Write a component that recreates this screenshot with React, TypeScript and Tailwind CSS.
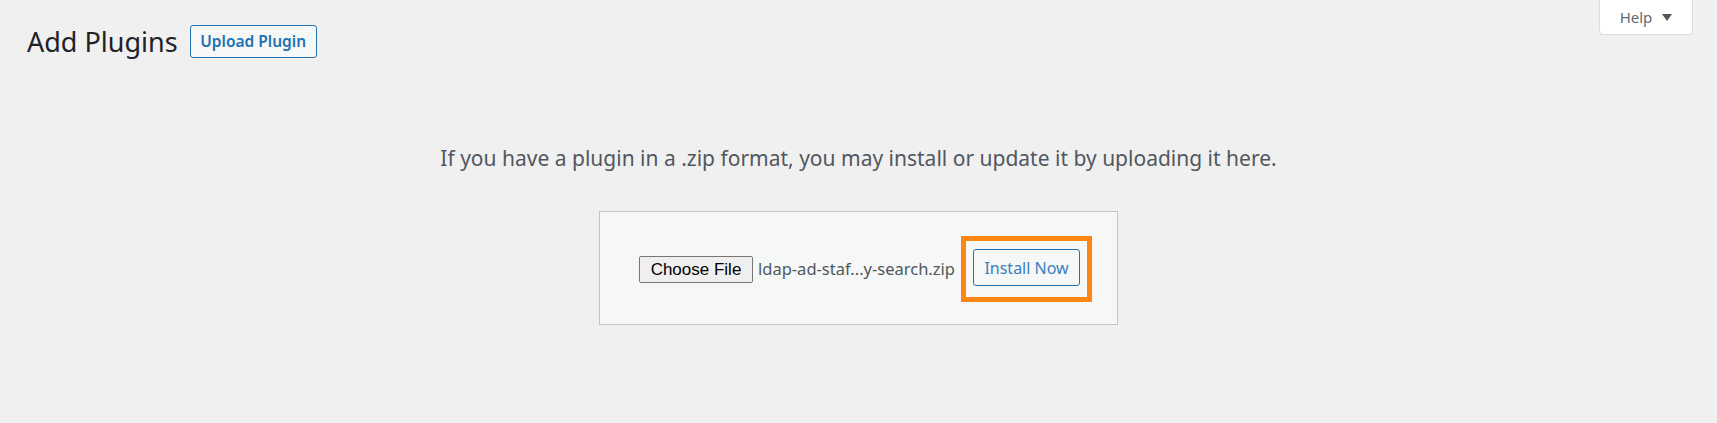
import { useState } from "react";

export default function AddPlugins() {
  const [fileName] = useState("ldap-ad-staf...y-search.zip");

  return (
    <div className="relative h-[423px] w-full overflow-hidden bg-[#f0f0f1] font-['Noto_Sans',sans-serif] text-[#3c434a]">
      {/* help tab */}
      <button className="absolute right-[24px] top-0 flex h-[35px] w-[94px] items-center justify-center gap-[10px] rounded-b-[4px] border border-t-0 border-[#dcdcde] bg-white text-[15px] text-[#646970]">
        <span>Help</span>
        <span className="mt-[1px] h-0 w-0 border-x-[5px] border-t-[7px] border-x-transparent border-t-[#50575e]" />
      </button>

      {/* header */}
      <div className="flex items-center pl-[27px] pt-[25px]">
        <h1 className="text-[27px] font-normal leading-[33px] text-[#1d2327]">Add Plugins</h1>
        <button className="ml-[12px] flex h-[33px] w-[127px] items-center justify-center rounded-[3px] border border-[#2271b1] bg-[#f6f7f7] text-[15.5px] font-semibold text-[#2271b1]">
          Upload Plugin
        </button>
      </div>

      {/* upload area */}
      <p className="mt-[86px] text-center text-[21px] leading-[28px] text-[#50575e]">
        If you have a plugin in a .zip format, you may install or update it by uploading it here.
      </p>

      <div className="mx-auto mt-[39px] flex w-[519px] items-center border border-[#c3c4c7] bg-[#f6f7f7] pb-[22px] pl-[39px] pr-[25px] pt-[24px]">
        <button className="h-[27px] w-[114px] rounded-[2px] border border-[#767676] bg-[#efefef] font-['Liberation_Sans',sans-serif] text-[17px] text-black">
          Choose File
        </button>
        <span className="ml-[5px] text-[16.5px] text-[#50575e]">{fileName}</span>

        <div className="ml-auto border-[5px] border-[#ff8514] pb-[11px] pl-[7px] pr-[7px] pt-[8px]">
          <button className="flex h-[37px] w-[107px] items-center justify-center rounded-[3px] border border-[#2271b1] bg-[#f6f7f7] text-[16px] text-[#3a7fbd]">
            Install Now
          </button>
        </div>
      </div>
    </div>
  );
}
